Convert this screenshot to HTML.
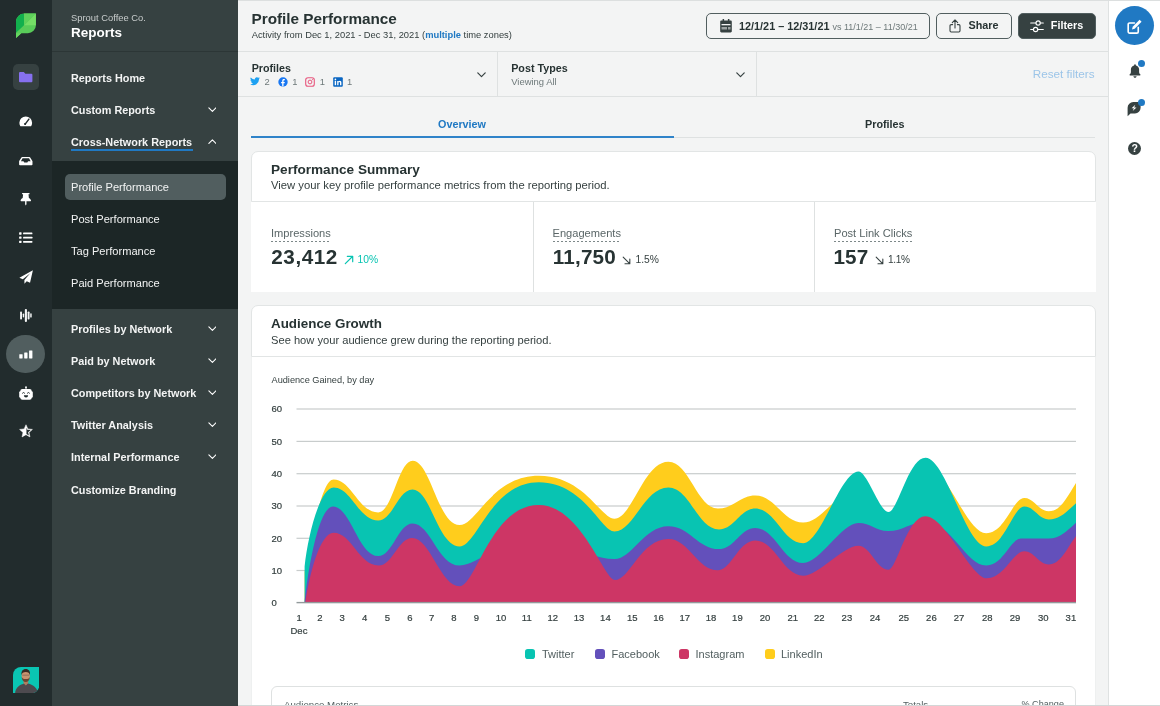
<!DOCTYPE html>
<html lang="en">
<head>
<meta charset="utf-8">
<title>Profile Performance – Reports</title>
<style>
*{box-sizing:border-box;margin:0;padding:0}
html,body{width:1160px;height:706px;overflow:hidden;background:#f3f4f4}
body{font-family:"Liberation Sans",Arial,sans-serif;color:#273333;position:relative;-webkit-font-smoothing:antialiased}
.abs{position:absolute}
#rail,#side,#main,#rrail{will-change:transform}
.t{position:absolute;white-space:nowrap;line-height:1}
/* rail */
#rail{left:0;top:0;width:52px;height:706px;background:#222c2d}
#side{left:52px;top:0;width:186.6px;height:706px;background:#364141}
#side .hdr{left:0;top:0;width:186px;height:52px;border-bottom:1px solid #2c3636}
#side .sub{left:0;top:161px;width:186px;height:148px;background:#1c2626}
#side .pill{left:12.5px;top:174px;width:161px;height:25.6px;border-radius:5px;background:#515e5f}
.nav{color:#f3f4f4;font-size:10.85px;font-weight:700;left:19px}
.navs{color:#f3f4f4;font-size:11.1px;font-weight:400;left:19px}
.chev{position:absolute;left:155.6px;width:8.8px;height:5.3px;margin-top:.4px}
/* main */
#main{left:238px;top:0;width:870px;height:706px;background:#f3f4f4}
#rrail{left:1108px;top:0;width:52px;height:706px;background:#fff;border-left:1px solid #dfe2e2}
.hline{position:absolute;height:1px;background:#dee1e1}
.vline{position:absolute;width:1px;background:#dee1e1}
.btn{position:absolute;top:13px;height:26px;border:1px solid #515e5f;border-radius:5px}
.card-h{position:absolute;left:13px;width:844.6px;background:#fff;border:1px solid #e2e5e5;border-radius:7px 7px 0 0}
.card-b{position:absolute;left:13px;width:844.6px;background:#fff}
.h2{font-size:13.6px;font-weight:700;color:#273333}
.p{font-size:11.25px;color:#364141}
.lbl{font-size:11.1px;color:#5a6667}
.big{font-size:20.7px;font-weight:700;color:#273333}
.pct{font-size:10.3px;color:#364141}
.dot{position:absolute;height:1px;background:repeating-linear-gradient(90deg,#7d8889 0 2px,transparent 2px 4px)}
.ax{font-size:9.5px;color:#364141;-webkit-text-stroke:.2px #364141}
.lg{font-size:11px;color:#515e5f}
.sq{position:absolute;width:10px;height:10px;border-radius:2.8px;top:649.3px}
#xl{position:absolute;left:0;top:613.4px;font-size:9.5px;color:#364141;line-height:10px;-webkit-text-stroke:.2px #364141}
#xl span{position:absolute;top:0;width:20px;text-align:center}
</style>
</head>
<body>
<div id="rail" class="abs">
  <!-- logo -->
  <svg class="abs" style="left:15px;top:13px" width="22" height="26" viewBox="15 13 22 26">
    <path d="M24.3 13.6H35.9V25.2a8 8 0 0 1-8 8H21.3L16 38V21.9a8.3 8.3 0 0 1 8.3-8.3z" fill="#59cb59"/>
    <path d="M24.3 13.6H24v11.6l-8 7.6V21.9a8.3 8.3 0 0 1 8.3-8.3z" fill="#12b04d"/>
    <path d="M35.9 13.6V25.2H24z" fill="#75dd66"/>
    <path d="M24 13.6h11.9L24 25.2z" fill="#5fd15b"/>
    <path d="M16 33.2h5.3L16 38z" fill="#67d661"/>
  </svg>
  <!-- folder button -->
  <div class="abs" style="left:13px;top:64px;width:26px;height:26px;border-radius:5px;background:#364141"></div>
  <svg class="abs" style="left:19px;top:72px" width="14" height="11" viewBox="0 0 14 11"><path d="M1 0h3.8l1.6 1.7H12.4a1 1 0 0 1 1 1V9.3a1 1 0 0 1-1 1H1a1 1 0 0 1-1-1V1a1 1 0 0 1 1-1z" fill="#8670ef"/></svg>
  <!-- gauge -->
  <svg class="abs" style="left:19px;top:116.200px" width="13.500" height="10.600" viewBox="0 0 14 11"><path d="M7 .5A6.6 6.6 0 0 0 .4 7.100c0 1.200.3 2.300.9 3.200.1.200.3.300.6.300h10.200c.3 0 .5-.1.600-.3.600-.9.900-2 .9-3.200A6.600 6.600 0 0 0 7 .5z" fill="#fff"/><path d="M10.300 3.200L6.600 8.200" stroke="#222c2d" stroke-width="1.500" stroke-linecap="round"/><circle cx="6.300" cy="8.300" r="1.100" fill="#222c2d"/></svg>
  <!-- inbox -->
  <svg class="abs" style="left:19px;top:157.200px" width="13.600" height="8.600" viewBox="0 0 14 9"><path d="M3.300 0h7.400c.4 0 .7.200.9.500L13.900 4.300c.1.100.1.300.1.500V7.800c0 .5-.4.900-.9.900H.9C.4 8.700 0 8.300 0 7.800V4.800c0-.2 0-.4.100-.5L2.400.5C2.600.2 2.900 0 3.300 0z" fill="#fff"/><path d="M3.600 1.400h6.800l1.700 3H9.400l-.8 1.400H5.400L4.600 4.400H1.900z" fill="#222c2d"/><path d="M3 3.300h8l.6 1.100H9.400l-.8 1.400H5.400L4.600 4.400H2.400z" fill="#fff" opacity=".0"/></svg>
  <!-- pin -->
  <svg class="abs" style="left:20.100px;top:192.400px" width="11.600" height="14.400" viewBox="0 0 12 14"><path d="M2.700.6h6.600c.4 0 .7.300.7.700s-.3.700-.7.700H8.800l.4 3.700c1.300.6 2.200 1.700 2.200 2.900 0 .3-.2.500-.5.500H6.700v3.200L6 13.600l-.7-1.300V9.100H1.100c-.3 0-.5-.2-.5-.5 0-1.200.9-2.300 2.200-2.900L3.200 2H2.700C2.300 2 2 1.700 2 1.300s.3-.7.700-.7z" fill="#fff"/></svg>
  <!-- list -->
  <svg class="abs" style="left:19.100px;top:232.300px" width="13.500" height="11.400" viewBox="0 0 14 12"><g fill="#fff"><rect x="0" y="0.300" width="2.600" height="2.500" rx=".5"/><rect x="4.200" y=".6" width="9.800" height="1.900" rx=".4"/><rect x="0" y="4.700" width="2.600" height="2.500" rx=".5"/><rect x="4.200" y="5" width="9.800" height="1.900" rx=".4"/><rect x="0" y="9.100" width="2.600" height="2.500" rx=".5"/><rect x="4.200" y="9.400" width="9.800" height="1.900" rx=".4"/></g></svg>
  <!-- plane -->
  <svg class="abs" style="left:18.600px;top:269.800px" width="14.300" height="14.600" viewBox="0 0 14 14"><path d="M13.600.2L.4 7.400l3.300 1.500L11 3 5.300 9.700v3.600l2.300-2.500 3.200 1.500z" fill="#fff"/></svg>
  <!-- waveform -->
  <svg class="abs" style="left:20px;top:309px" width="12" height="13" viewBox="0 0 12 13"><g fill="#f3f4f4"><rect x=".1" y="2.400" width="1.900" height="8.200" rx=".8"/><rect x="2.750" y="4.500" width="1.400" height="4" rx=".7"/><rect x="4.850" y="0" width="2.100" height="13" rx=".9"/><rect x="7.650" y="2.400" width="1.900" height="8.200" rx=".8"/><rect x="10.200" y="4.300" width="1.500" height="4.300" rx=".7"/></g></svg>
  <!-- active circle -->
  <div class="abs" style="left:6.400px;top:334.800px;width:38.600px;height:38.600px;border-radius:50%;background:#515e5f"></div>
  <svg class="abs" style="left:19px;top:350px" width="14" height="9" viewBox="0 0 14 9"><g fill="#fff"><rect x=".3" y="4.200" width="3.300" height="4.300" rx=".4"/><rect x="5.200" y="2.600" width="3.300" height="5.900" rx=".4"/><rect x="10.100" y=".4" width="3.300" height="8.100" rx=".4"/></g></svg>
  <!-- robot -->
  <svg class="abs" style="left:19px;top:386px" width="14" height="14" viewBox="0 0 14 14"><g fill="#fff"><circle cx="7" cy="1.300" r=".95"/><rect x="6.550" y="1.500" width=".9" height="2"/><rect x="1.300" y="2.900" width="11.400" height="10.800" rx="2"/><rect x=".2" y="5.300" width="13.600" height="6.400" rx="1.200"/></g><g fill="none" stroke="#222c2d" stroke-width="1" stroke-linecap="round"><path d="M3.500 7.100q1.050-1.500 2.100 0M8.400 7.100q1.050-1.500 2.100 0"/></g><path d="M4.900 9.300h4.200q0 2.300-2.100 2.300T4.900 9.300z" fill="#222c2d"/></svg>
  <!-- star -->
  <svg class="abs" style="left:19px;top:423.800px" width="14" height="14.500" viewBox="0 0 14 14.500"><path d="M7.00 0.75L8.85 4.95L13.42 5.41L10.00 8.47L10.97 12.96L7.00 10.65L3.03 12.96L4.00 8.47L0.58 5.41L5.15 4.95z" fill="#fff" stroke="#fff" stroke-width=".5" stroke-linejoin="round"/><path d="M7.45 3.75L8.32 5.78L11.66 6.09L9.14 8.30L9.88 11.56L7.45 10.12z" fill="#222c2d"/></svg>
  <!-- avatar -->
  <svg class="abs" style="left:12.700px;top:666.800px" width="26.300" height="26.300" viewBox="0 0 26 26">
    <defs><clipPath id="av"><path d="M8 0h18v18a8 8 0 0 1-8 8H0V8a8 8 0 0 1 8-8z"/></clipPath></defs>
    <g clip-path="url(#av)">
      <rect width="26" height="26" fill="#0ac5b3"/>
      <path d="M2 26.500c.3-5.500 3.200-8.300 7.800-9.800l2.900-1.200 3 1.100c4.400 1.300 8.200 3.800 9.300 9.900z" fill="#4d4a4f"/>
      <path d="M10.300 15.800l2.400 2.400 2.500-2.500-.3-2H10.500z" fill="#b07c5e"/>
      <ellipse cx="12.600" cy="8.600" rx="4.100" ry="5.500" fill="#c9946f"/>
      <path d="M8.400 8c-.5-3.600 1.300-5.900 4.200-5.900s4.700 2.300 4.200 5.900c-.5-1.900-1.700-3-4.200-3S8.900 6.100 8.400 8z" fill="#3b2b24"/>
      <path d="M8.600 9.800c.2 3.200 1.800 5 4 5s3.800-1.800 4-5c-.8 1.500-2 2.100-4 2.100s-3.200-.6-4-2.100z" fill="#6a4633"/>
      <rect x="9" y="7.600" width="7.200" height=".8" rx=".4" fill="#5b4a44" opacity=".65"/>
    </g>
  </svg>
</div>

<div id="side" class="abs">
  <div class="hdr abs"></div>
  <div class="t" style="left:19px;top:13px;font-size:9.4px;color:#c8cccc">Sprout Coffee Co.</div>
  <div class="t" style="left:19px;top:26px;font-size:13.5px;font-weight:700;color:#fff">Reports</div>
  <div class="t nav" style="top:72.7px">Reports Home</div>
  <div class="t nav" style="top:104.7px">Custom Reports</div>
  <svg class="chev" style="top:107px" viewBox="0 0 10 6"><path d="M1 1l4 4 4-4" fill="none" stroke="#fff" stroke-width="1.25" stroke-linecap="round" stroke-linejoin="round"/></svg>
  <div class="t nav" style="top:136.7px">Cross-Network Reports</div>
  <div class="abs" style="left:19px;top:149.4px;width:121.5px;height:2px;background:#2079c3"></div>
  <svg class="chev" style="top:138.7px" viewBox="0 0 10 6"><path d="M1 5l4-4 4 4" fill="none" stroke="#fff" stroke-width="1.25" stroke-linecap="round" stroke-linejoin="round"/></svg>
  <div class="sub abs"></div>
  <div class="pill abs"></div>
  <div class="t navs" style="top:182.4px">Profile Performance</div>
  <div class="t navs" style="top:214.4px">Post Performance</div>
  <div class="t navs" style="top:246.4px">Tag Performance</div>
  <div class="t navs" style="top:278.4px">Paid Performance</div>
  <div class="t nav" style="top:323.7px">Profiles by Network</div>
  <svg class="chev" style="top:326px" viewBox="0 0 10 6"><path d="M1 1l4 4 4-4" fill="none" stroke="#fff" stroke-width="1.25" stroke-linecap="round" stroke-linejoin="round"/></svg>
  <div class="t nav" style="top:355.7px">Paid by Network</div>
  <svg class="chev" style="top:358px" viewBox="0 0 10 6"><path d="M1 1l4 4 4-4" fill="none" stroke="#fff" stroke-width="1.25" stroke-linecap="round" stroke-linejoin="round"/></svg>
  <div class="t nav" style="top:387.7px">Competitors by Network</div>
  <svg class="chev" style="top:390px" viewBox="0 0 10 6"><path d="M1 1l4 4 4-4" fill="none" stroke="#fff" stroke-width="1.25" stroke-linecap="round" stroke-linejoin="round"/></svg>
  <div class="t nav" style="top:419.7px">Twitter Analysis</div>
  <svg class="chev" style="top:422px" viewBox="0 0 10 6"><path d="M1 1l4 4 4-4" fill="none" stroke="#fff" stroke-width="1.25" stroke-linecap="round" stroke-linejoin="round"/></svg>
  <div class="t nav" style="top:451.7px">Internal Performance</div>
  <svg class="chev" style="top:454px" viewBox="0 0 10 6"><path d="M1 1l4 4 4-4" fill="none" stroke="#fff" stroke-width="1.25" stroke-linecap="round" stroke-linejoin="round"/></svg>
  <div class="t nav" style="top:484.7px">Customize Branding</div>
</div>

<div id="main" class="abs">
  <!-- header -->
  <div class="t" style="left:13.500px;top:10.800px;font-size:15.300px;font-weight:700;color:#273333">Profile Performance</div>
  <div class="t" style="left:13.700px;top:30.600px;font-size:9.360px;color:#364141">Activity from Dec 1, 2021 - Dec 31, 2021 (<span style="color:#2079c3;font-weight:700">multiple</span> time zones)</div>
  <div class="btn" style="left:468px;width:224px"></div>
  <svg class="abs" style="left:482px;top:19px" width="12" height="14" viewBox="0 0 12 14"><path d="M2.600 0h1.500v1.600h3.800V0h1.500v1.600h1.200c.7 0 1.200.5 1.200 1.200v9.400c0 .7-.5 1.200-1.200 1.200H1.400c-.7 0-1.200-.5-1.200-1.200V2.800c0-.7.500-1.200 1.200-1.200h1.200z" fill="#364141"/><rect x="1.500" y="5" width="9" height="1.300" fill="#f3f4f4"/><rect x="1.500" y="8" width="5.500" height="2.500" fill="#f3f4f4" opacity=".55"/><rect x="8" y="8" width="2.500" height="2.500" fill="#f3f4f4" opacity=".55"/></svg>
  <div class="t" style="left:501px;top:20.600px;font-size:10.850px;font-weight:700;color:#273333">12/1/21 – 12/31/21 <span style="font-weight:400;font-size:9px;color:#6e797a">vs 11/1/21 – 11/30/21</span></div>
  <div class="btn" style="left:698px;width:76px"></div>
  <svg class="abs" style="left:711px;top:19px" width="12" height="14" viewBox="0 0 12 14"><path d="M6 9V1.200M3.300 3.600L6 .9l2.700 2.700M3.600 5.600H2.200a1.200 1.200 0 0 0-1.200 1.200v5a1.200 1.200 0 0 0 1.200 1.200h7.600a1.200 1.200 0 0 0 1.200-1.200v-5a1.200 1.200 0 0 0-1.200-1.200H8.400" fill="none" stroke="#364141" stroke-width="1.100" stroke-linecap="round" stroke-linejoin="round"/></svg>
  <div class="t" style="left:730.500px;top:20.300px;font-size:10.800px;font-weight:700;color:#273333">Share</div>
  <div class="btn" style="left:780px;width:77.500px;background:#364141"></div>
  <svg class="abs" style="left:792.300px;top:19.600px" width="14" height="13" viewBox="0 0 14 13"><g fill="none" stroke="#fff" stroke-width="1.150" stroke-linecap="round"><path d="M.7 3h5.300M10.400 3h2.900M.7 9.500h2.700M7.800 9.500h5.500"/><circle cx="8.100" cy="3" r="2.150"/><circle cx="5.600" cy="9.500" r="2.150"/></g></svg>
  <div class="t" style="left:812.800px;top:20.300px;font-size:10.800px;font-weight:700;color:#fff">Filters</div>
  <div class="hline" style="left:0;top:51px;width:870px"></div>
  <!-- filter bar -->
  <div class="t" style="left:13.700px;top:63.200px;font-size:10.700px;font-weight:700;color:#273333">Profiles</div>
  <svg class="abs" style="left:12px;top:76.500px" width="10" height="9" viewBox="0 0 10 9"><path d="M9.800 1.100c-.4.200-.7.300-1.100.3.400-.2.700-.6.900-1.100-.4.200-.8.400-1.300.5A2 2 0 0 0 4.900 2.600 5.700 5.700 0 0 1 .8.500a2 2 0 0 0 .6 2.700c-.3 0-.6-.1-.9-.2 0 1 .7 1.800 1.600 2-.3.100-.6.100-.9 0 .3.800 1 1.400 1.900 1.400A4 4 0 0 1 .2 7.200 5.700 5.700 0 0 0 9 2.200c.3-.3.600-.7.800-1.100z" fill="#1da1f2"/></svg>
  <div class="t" style="left:26.500px;top:77.200px;font-size:9.400px;color:#6e797a">2</div>
  <svg class="abs" style="left:40px;top:76.500px" width="10" height="10" viewBox="0 0 10 10"><circle cx="5" cy="5" r="4.700" fill="#1877f2"/><path d="M5.500 9.600V6.200h1.100l.2-1.300H5.500V4c0-.4.200-.7.700-.7h.7V2.200c-.3 0-.6-.1-1-.1-1 0-1.700.6-1.700 1.700v1.100H3.100v1.300h1.100v3.400z" fill="#fff"/></svg>
  <div class="t" style="left:54.300px;top:77.200px;font-size:9.400px;color:#6e797a">1</div>
  <svg class="abs" style="left:67px;top:76.500px" width="10" height="10" viewBox="0 0 10 10"><rect x=".7" y=".7" width="8.600" height="8.600" rx="2.300" fill="none" stroke="#e8577e" stroke-width="1.100"/><circle cx="5" cy="5" r="1.900" fill="none" stroke="#e8577e" stroke-width="1"/><circle cx="7.400" cy="2.600" r=".55" fill="#e8577e"/></svg>
  <div class="t" style="left:81.800px;top:77.200px;font-size:9.400px;color:#6e797a">1</div>
  <svg class="abs" style="left:95px;top:76.500px" width="10" height="10" viewBox="0 0 10 10"><rect x=".2" y=".2" width="9.600" height="9.600" rx="1" fill="#0a66c2"/><rect x="1.700" y="3.900" width="1.400" height="4.300" fill="#fff"/><circle cx="2.400" cy="2.400" r=".85" fill="#fff"/><path d="M4.200 3.900h1.300v.6c.3-.5.800-.7 1.400-.7 1.100 0 1.500.7 1.500 1.800v2.600H7V5.900c0-.5-.2-.9-.7-.9s-.8.400-.8.900v2.300H4.200z" fill="#fff"/></svg>
  <div class="t" style="left:109px;top:77.200px;font-size:9.400px;color:#6e797a">1</div>
  <svg class="abs" style="left:239px;top:71.500px" width="9" height="6" viewBox="0 0 9 6"><path d="M.8.900l3.700 3.700L8.200.9" fill="none" stroke="#364141" stroke-width="1.200" stroke-linecap="round" stroke-linejoin="round"/></svg>
  <div class="vline" style="left:259px;top:52px;height:45px"></div>
  <div class="t" style="left:273.200px;top:63.200px;font-size:10.750px;font-weight:700;color:#273333">Post Types</div>
  <div class="t" style="left:273.200px;top:77.200px;font-size:9.450px;color:#6e797a">Viewing All</div>
  <svg class="abs" style="left:497.500px;top:71.500px" width="9" height="6" viewBox="0 0 9 6"><path d="M.8.900l3.700 3.700L8.200.9" fill="none" stroke="#364141" stroke-width="1.200" stroke-linecap="round" stroke-linejoin="round"/></svg>
  <div class="vline" style="left:518px;top:52px;height:45px"></div>
  <div class="t" style="right:13.500px;top:68px;font-size:11.700px;color:#9cc5e8">Reset filters</div>
  <div class="hline" style="left:0;top:96px;width:870px"></div>
  <!-- tabs -->
  <div class="t" style="left:200px;top:119px;font-size:10.800px;font-weight:700;color:#2079c3">Overview</div>
  <div class="t" style="left:627px;top:119px;font-size:10.800px;font-weight:700;color:#273333">Profiles</div>
  <div class="hline" style="left:435px;top:136.500px;width:422px;background:#dee1e1"></div>
  <div class="abs" style="left:13px;top:135.700px;width:422.500px;height:2px;background:#2f83c9"></div>
  <!-- card 1 -->
  <div class="card-h" style="top:151px;height:51px"></div>
  <div class="card-b" style="top:202px;height:90px"></div>
  <div class="t h2" style="left:33px;top:162.500px">Performance Summary</div>
  <div class="t p" style="left:33px;top:180px">View your key profile performance metrics from the reporting period.</div>
  <div class="vline" style="left:295px;top:202px;height:90px"></div>
  <div class="vline" style="left:576px;top:202px;height:90px"></div>
  <div class="t lbl" style="left:33px;top:228px">Impressions</div>
  <div class="dot" style="left:33px;top:241px;width:60px"></div>
  <div class="t big" style="left:33.300px;top:246.900px;letter-spacing:.55px">23,412</div>
  <svg class="abs" style="left:105.500px;top:254.500px" width="10" height="10" viewBox="0 0 10 10"><path d="M1.300 8.700L8.500 1.500M3.300 1.300h5.400v5.400" fill="none" stroke="#08c4b2" stroke-width="1.200" stroke-linecap="round" stroke-linejoin="round"/></svg>
  <div class="t pct" style="left:119.500px;top:255.200px;color:#08c4b2">10%</div>
  <div class="t lbl" style="left:314.500px;top:228px">Engagements</div>
  <div class="dot" style="left:314.500px;top:241px;width:67.500px"></div>
  <div class="t big" style="left:314.700px;top:246.900px;letter-spacing:.2px">11,750</div>
  <svg class="abs" style="left:384px;top:255.500px" width="9" height="9" viewBox="0 0 10 10"><path d="M1.300 1.300L8.500 8.500M3.300 8.700h5.400V3.300" fill="none" stroke="#364141" stroke-width="1.200" stroke-linecap="round" stroke-linejoin="round"/></svg>
  <div class="t pct" style="left:397.500px;top:255.200px">1.5%</div>
  <div class="t lbl" style="left:596px;top:228px">Post Link Clicks</div>
  <div class="dot" style="left:596px;top:241px;width:78px"></div>
  <div class="t big" style="left:595.500px;top:246.900px;letter-spacing:.1px">157</div>
  <svg class="abs" style="left:636.500px;top:255.500px" width="9" height="9" viewBox="0 0 10 10"><path d="M1.300 1.300L8.500 8.500M3.300 8.700h5.400V3.300" fill="none" stroke="#364141" stroke-width="1.200" stroke-linecap="round" stroke-linejoin="round"/></svg>
  <div class="t pct" style="left:650px;top:255.200px;font-size:10.100px;letter-spacing:-.35px">1.1%</div>
  <!-- card 2 -->
  <div class="card-h" style="top:305px;height:52px"></div>
  <div class="card-b" style="top:357px;height:349px;border-left:1px solid #eef0f0;border-right:1px solid #eef0f0"></div>
  <div class="t h2" style="left:33px;top:317px;font-size:13.4px">Audience Growth</div>
  <div class="t p" style="left:33px;top:334.500px;font-size:11.15px">See how your audience grew during the reporting period.</div>
  <div class="t" style="left:33.500px;top:375.500px;font-size:9.200px;color:#364141">Audience Gained, by day</div>
  <svg class="abs" style="left:0;top:0" width="870" height="706" viewBox="0 0 870 706">
    <rect x="58.5" y="408.4" width="779.5" height="1.2" fill="#c8cccc"/>
    <rect x="58.5" y="440.8" width="779.5" height="1.2" fill="#c8cccc"/>
    <rect x="58.5" y="473.1" width="779.5" height="1.2" fill="#c8cccc"/>
    <rect x="58.5" y="505.4" width="779.5" height="1.2" fill="#c8cccc"/>
    <rect x="58.5" y="537.7" width="779.5" height="1.2" fill="#c8cccc"/>
    <rect x="58.5" y="569.9" width="779.5" height="1.2" fill="#c8cccc"/>
    <path d="M66.6 602.6L66.6 572C74 540 83 479.4 95.6 479.4C113.4 479.4 120.6 512.4 140.2 512.4C154.6 512.4 160.2 460.7 174.6 460.7C192.5 460.7 200 525.1 221.6 525.1C239 525.1 253.3 475.8 300.8 475.8C346.2 475.8 362.8 518.7 376.4 518.7C394.2 518.7 405.6 461.8 430.4 461.8C451.2 461.8 459.1 508.5 479.9 508.5C495.6 508.5 501.6 495.4 517.3 495.4C537.4 495.4 545 522.6 565.1 522.6C584.5 522.6 601 488 620.4 488C633 488 637.9 518 650.5 518C667.1 518 673.4 468 690 468C709.2 468 728.9 533.2 748.1 533.2C767.2 533.2 774.8 498.1 786.3 498.1C796.5 498.1 800.5 511.3 810.7 511.3C822.2 511.3 828.4 498.2 838 482.9L838 602.6Z" fill="#ffcd1c"/>
    <path d="M66.6 602.6L66.6 566.5C70 535 82 487.5 95.6 487.5C113.4 487.5 120.6 520.4 140.2 520.4C154.6 520.4 160.2 489.6 174.6 489.6C192.5 489.6 200 546.4 221.6 546.4C239 546.4 253.3 482.2 300.8 482.2C346.2 482.2 362.8 531.5 376.4 531.5C395.8 531.5 406.1 487.5 430.4 487.5C451.7 487.5 459.7 529.4 481 529.4C496.2 529.4 502.1 508.5 517.3 508.5C537.4 508.5 545 543.2 565.1 543.2C582.8 543.2 602.7 471.4 620.4 471.4C629.4 471.4 641.5 512 650.5 512C659.8 512 670.5 457.8 687.5 457.8C707.5 457.8 728.1 546.4 748.1 546.4C767.2 546.4 774.8 506.6 786.3 506.6C796.5 506.6 800.5 519.4 810.7 519.4C822.2 519.4 828.4 511.8 838 503.2L838 602.6Z" fill="#08c4b2"/>
    <path d="M66.6 602.6L66.6 602C70.5 566 81 506.6 94.9 506.6C113 506.6 120.3 556.1 140.2 556.1C154.6 556.1 160.2 523.4 174.6 523.4C192.5 523.4 200 565.5 221.6 565.5C243 565.5 271.1 530 307 530C336.1 530 341.7 559.1 376.4 559.1C394.2 559.1 405.6 526.2 430.4 526.2C451.7 526.2 459.7 549.1 481 549.1C496.2 549.1 502.1 527.9 517.3 527.9C537.4 527.9 545 563 565.1 563C582.2 563 603.3 523 620.4 523C632.9 523 637.6 531.1 650.1 531.1C665.8 531.1 671.8 522 687.5 522C713 522 728.1 565.5 748.1 565.5C765.5 565.5 772.5 538.5 783 538.5C794.6 538.5 799.1 538.5 810.7 538.5C822.2 538.5 828.4 531.4 838 522.8L838 602.6Z" fill="#6350bb"/>
    <path d="M67.3 602.6L67.3 602.6C71.5 574 82 532.8 95.6 532.8C113.6 532.8 120.8 565.5 140.6 565.5C154.7 565.5 160.1 537.9 174.2 537.9C192.2 537.9 202.6 586.3 221.6 586.3C237.4 586.3 253.3 504.9 300.8 504.9C342.7 504.9 366.2 580 376.9 580C391.9 580 402.6 538.9 430.4 538.9C451.2 538.9 459.1 570.2 479.9 570.2C493.4 570.2 500.5 540.6 517.3 540.6C537.4 540.6 545 575.7 565.1 575.7C580.6 575.7 604.9 545.7 620.4 545.7C632.4 545.7 638.5 569.8 650.5 569.8C658.6 569.8 669 516.2 687.5 516.2C707.1 516.2 733.4 578.3 748.7 578.3C766.4 578.3 775 551.3 786.3 551.3C796.5 551.3 800.5 564.4 810.7 564.4C822.2 564.4 828.4 549.3 838 535.9L838 602.6Z" fill="#cd3665"/>
    <rect x="58.5" y="601.9" width="779.5" height="1.4" fill="#929a9b"/>
    <text x="33.5" y="412.3" font-family="Liberation Sans, sans-serif" font-size="9.5" fill="#364141" stroke="#364141" stroke-width=".2">60</text>
    <text x="33.5" y="444.7" font-family="Liberation Sans, sans-serif" font-size="9.5" fill="#364141" stroke="#364141" stroke-width=".2">50</text>
    <text x="33.5" y="477.0" font-family="Liberation Sans, sans-serif" font-size="9.5" fill="#364141" stroke="#364141" stroke-width=".2">40</text>
    <text x="33.5" y="509.3" font-family="Liberation Sans, sans-serif" font-size="9.5" fill="#364141" stroke="#364141" stroke-width=".2">30</text>
    <text x="33.5" y="541.6" font-family="Liberation Sans, sans-serif" font-size="9.5" fill="#364141" stroke="#364141" stroke-width=".2">20</text>
    <text x="33.5" y="573.8" font-family="Liberation Sans, sans-serif" font-size="9.5" fill="#364141" stroke="#364141" stroke-width=".2">10</text>
    <text x="33.5" y="605.9" font-family="Liberation Sans, sans-serif" font-size="9.5" fill="#364141" stroke="#364141" stroke-width=".2">0</text>
  </svg>
  <div id="xl"><span style="left:51.1px">1</span><span style="left:71.9px">2</span><span style="left:94.1px">3</span><span style="left:116.7px">4</span><span style="left:139.3px">5</span><span style="left:162.0px">6</span><span style="left:183.7px">7</span><span style="left:205.9px">8</span><span style="left:228.5px">9</span><span style="left:253.0px">10</span><span style="left:278.8px">11</span><span style="left:304.7px">12</span><span style="left:331.0px">13</span><span style="left:357.4px">14</span><span style="left:384.2px">15</span><span style="left:410.5px">16</span><span style="left:436.8px">17</span><span style="left:463.1px">18</span><span style="left:489.4px">19</span><span style="left:517.1px">20</span><span style="left:544.8px">21</span><span style="left:571.2px">22</span><span style="left:598.9px">23</span><span style="left:627.1px">24</span><span style="left:655.7px">25</span><span style="left:683.4px">26</span><span style="left:711.1px">27</span><span style="left:739.3px">28</span><span style="left:767.0px">29</span><span style="left:795.2px">30</span><span style="left:822.9px">31</span></div>
  <div class="t ax" style="left:52.500px;top:626px">Dec</div>
  <!-- legend -->
  <div class="sq" style="left:287px;background:#08c4b2"></div>
  <div class="t lg" style="left:304px;top:649px">Twitter</div>
  <div class="sq" style="left:357px;background:#6350bb"></div>
  <div class="t lg" style="left:373.500px;top:649px">Facebook</div>
  <div class="sq" style="left:441px;background:#cd3665"></div>
  <div class="t lg" style="left:457.500px;top:649px">Instagram</div>
  <div class="sq" style="left:526.500px;background:#ffcd1c"></div>
  <div class="t lg" style="left:543px;top:649px">LinkedIn</div>
  <!-- table -->
  <div class="abs" style="left:33px;top:686px;width:805px;height:40px;border:1px solid #dee1e1;border-radius:6px;background:#fff"></div>
  <div class="t" style="left:46px;top:699.700px;font-size:9.700px;color:#515e5f">Audience Metrics</div>
  <div class="t" style="left:665px;top:699.700px;font-size:9.600px;color:#515e5f">Totals</div>
  <div class="t" style="left:783.500px;top:699.700px;font-size:9.100px;color:#515e5f">% Change</div>
</div>

<div id="rrail" class="abs">
  <div class="abs" style="left:6px;top:6px;width:39px;height:39px;border-radius:50%;background:#2079c3"></div>
  <svg class="abs" style="left:17px;top:17.5px" width="17.500" height="17.500" viewBox="0 0 16 16"><path d="M11.200 8.600v3.900a1.300 1.300 0 0 1-1.300 1.300H3.300A1.300 1.300 0 0 1 2 12.500V5.900a1.300 1.300 0 0 1 1.300-1.300h4.400" fill="none" stroke="#fff" stroke-width="1.500" stroke-linecap="round"/><path d="M12.400 1.700l1.800 1.800-6.300 6.300-2.400.6.600-2.400z" fill="#fff"/></svg>
  <!-- bell -->
  <svg class="abs" style="left:19.600px;top:64px" width="12" height="14" viewBox="0 0 12 14"><path d="M6 .3c.5 0 .9.400.9.900v.4c1.900.4 3.200 2 3.200 4v2.300c0 .8.300 1.500.8 2.100l.5.500c.3.300.1.900-.4.900H1c-.5 0-.7-.6-.4-.9l.5-.5c.5-.6.800-1.300.8-2.100V5.600c0-2 1.300-3.600 3.200-4v-.4c0-.5.400-.9.900-.9zM4.400 12.200h3.200c0 .9-.7 1.500-1.600 1.500s-1.600-.6-1.600-1.500z" fill="#364141"/></svg>
  <div class="abs" style="left:29px;top:60px;width:7.200px;height:7.200px;border-radius:50%;background:#2079c3"></div>
  <!-- chat bolt -->
  <svg class="abs" style="left:18.300px;top:100.800px" width="14" height="16" viewBox="0 0 14 16"><path d="M6.300 1h7.300v5.800a5.600 5.600 0 0 1-5.600 5.600H3.500L.6 15.200V6.700A5.700 5.700 0 0 1 6.300 1z" fill="#364141"/><path d="M8.300 3.800L4.600 7.300h2.300L5.700 9.900l3.800-3.500H7.200z" fill="#fff"/></svg>
  <div class="abs" style="left:29px;top:98.800px;width:7.200px;height:7.200px;border-radius:50%;background:#2079c3"></div>
  <!-- help -->
  <div class="abs" style="left:19px;top:141.500px;width:13.200px;height:13.200px;border-radius:50%;background:#364141"></div>
  <div class="t" style="left:19px;top:143.100px;width:13.200px;text-align:center;font-size:10.500px;font-weight:700;color:#fff">?</div>
</div>
<div class="abs" style="left:238px;top:0;width:922px;height:1px;background:#dcdfdf;will-change:transform"></div>
<div class="abs" style="left:238px;top:705px;width:922px;height:1px;background:#d3d7d7;will-change:transform"></div>

</body>
</html>
